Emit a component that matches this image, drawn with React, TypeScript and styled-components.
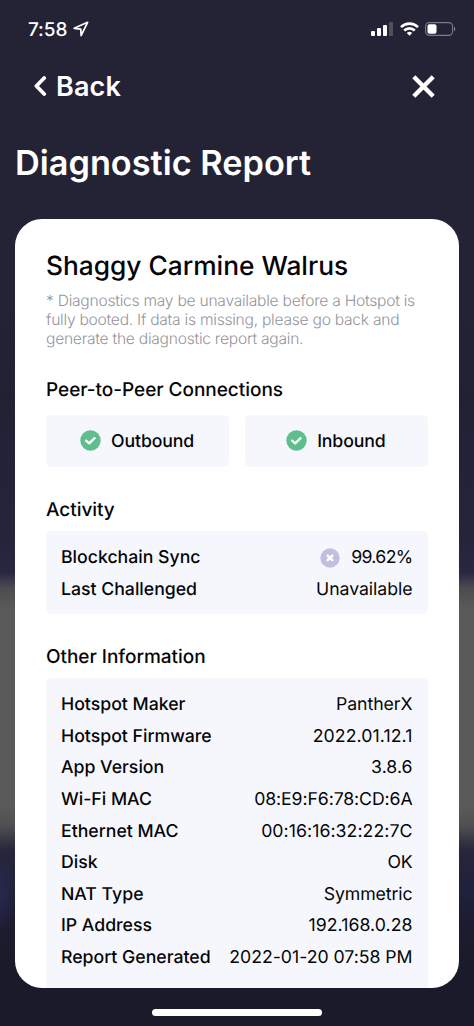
import React from 'react';
import styled, { createGlobalStyle } from 'styled-components';

const GlobalStyle = createGlobalStyle`
  *, *::before, *::after { box-sizing: border-box; }
  body {
    margin: 0;
    font-family: Inter, "Liberation Sans", sans-serif;
    text-rendering: geometricPrecision;
    -webkit-font-smoothing: antialiased;
    background: #242336;
  }
  h1, h2, h3, p, dl, dt, dd { margin: 0; font-weight: inherit; }
`;

const Screen = styled.main`
  width: 474px;
  height: 1026px;
  display: flex;
  flex-direction: column;
  overflow: hidden;
  color: #fff;
  background:
    radial-gradient(ellipse 16px 40px at 0 893px, rgba(44, 44, 84, 0.7), rgba(44, 44, 84, 0)),
    linear-gradient(
      180deg,
      #242336 0, #242336 300px, #222134 400px, #25243a 540px, #292843 573px,
      #4c4c50 588px, #5a5a5a 610px, #5a5a5a 805px, #505052 825px, #26273b 850px,
      #1f203a 895px, #1b1c2e 930px, #1a1b2a 960px, #1a1b2a 1026px
    );
`;

const StatusBar = styled.header`
  height: 58px;
  padding: 0 18px 0 28px;
  display: flex;
  align-items: center;
  justify-content: space-between;
`;

const Clock = styled.div`
  display: flex;
  align-items: center;
  gap: 5.5px;
  font-size: 19px;
  font-weight: 500;
  line-height: 24px;
`;

const ClockText = styled.span`
  padding-top: 2px;
  letter-spacing: -0.1px;
`;

const Indicators = styled.div`
  display: flex;
  align-items: center;
  gap: 6.5px;
`;

const Icon = styled.svg`
  display: block;
  flex: none;
`;

const NavBar = styled.nav`
  height: 56px;
  padding: 0 39px 0 34px;
  display: flex;
  align-items: center;
  justify-content: space-between;
`;

const PlainButton = styled.button`
  display: flex;
  align-items: center;
  gap: 9px;
  padding: 0;
  border: 0;
  background: none;
  color: inherit;
  font: 600 27px/32px Inter, "Liberation Sans", sans-serif;
  letter-spacing: 0;
`;

const BackText = styled.span`
  padding-top: 1.5px;
  letter-spacing: 0.15px;
`;

const PageTitle = styled.h1`
  height: 104.5px;
  padding: 28px 0 0 15px;
  font-size: 34.3px;
  font-weight: 600;
  line-height: 44px;
  white-space: nowrap;
`;

const Card = styled.article`
  height: 769.5px;
  margin: 0 15px;
  padding: 31px 31px 0;
  border-radius: 27px;
  overflow: hidden;
  background: #fff;
  color: #050507;
`;

const HotspotName = styled.h2`
  font-size: 26.3px;
  font-weight: 500;
  line-height: 34px;
  white-space: nowrap;
`;

const Note = styled.p`
  margin-top: 8.5px;
  font-size: 15.6px;
  font-weight: 300;
  line-height: 18.8px;
  letter-spacing: -0.25px;
  color: #94959b;
  white-space: nowrap;
`;

const Section = styled.section<{ $gap: number }>`
  margin-top: ${({ $gap }) => $gap}px;
`;

const SectionTitle = styled.h3<{ $space?: number }>`
  height: 26px;
  margin-bottom: ${({ $space = 8 }) => $space}px;
  font-size: 19px;
  font-weight: 500;
  line-height: 26px;
  letter-spacing: -0.04px;
`;

const StatusGrid = styled.div`
  display: grid;
  grid-template-columns: 1fr 1fr;
  gap: 15.5px;
`;

const StatusTile = styled.div`
  height: 52px;
  padding-right: 1px;
  border-radius: 5px;
  background: #f6f7fc;
  display: flex;
  align-items: center;
  justify-content: center;
  gap: 10px;
  font-size: 17.7px;
  font-weight: 500;
  line-height: 22px;
  letter-spacing: -0.12px;
`;

const TileLabel = styled.span`
  padding-top: 2px;
`;

const Panel = styled.dl<{ $height: number }>`
  height: ${({ $height }) => $height}px;
  padding: 11px 15.5px 9px 15px;
  border-radius: 5px;
  background: #f6f7fc;
`;

const Row = styled.div`
  height: 31.6px;
  display: flex;
  align-items: center;
  justify-content: space-between;
  font-size: 17.7px;
  white-space: nowrap;
`;

const Label = styled.dt`
  font-weight: 500;
  letter-spacing: -0.01px;
`;

const Value = styled.dd<{ $tracking?: number }>`
  display: flex;
  align-items: center;
  gap: 11px;
  font-weight: 400;
  letter-spacing: ${({ $tracking = 0 }) => $tracking}px;
`;

const HomeIndicator = styled.div`
  width: 170px;
  height: 6.5px;
  margin: 21px 0 0 152px;
  flex: none;
  border-radius: 4px;
  background: #fff;
`;

const CheckBadge = () => (
  <Icon width="21" height="21" viewBox="0 0 21 21">
    <circle cx="10.5" cy="10.5" r="10.2" fill="#5fbf8c" />
    <path d="M6.1 10.6l3.1 2.8 5.4-5.3" fill="none" stroke="#fff" strokeWidth="2.3" strokeLinecap="round" strokeLinejoin="round" />
  </Icon>
);

const CrossBadge = () => (
  <Icon width="20" height="20" viewBox="0 0 20 20">
    <circle cx="10" cy="10" r="9.7" fill="#bfbfe1" />
    <path d="M7.7 7.6l4.6 4.6M12.3 7.6l-4.6 4.6" fill="none" stroke="#fff" strokeWidth="2.6" strokeLinecap="round" />
  </Icon>
);

const details: [string, string, number?][] = [
  ['Hotspot Maker', 'PantherX', -0.05],
  ['Hotspot Firmware', '2022.01.12.1', 0.08],
  ['App Version', '3.8.6'],
  ['Wi-Fi MAC', '08:E9:F6:78:CD:6A', -0.11],
  ['Ethernet MAC', '00:16:16:32:22:7C', 0.06],
  ['Disk', 'OK', -0.2],
  ['NAT Type', 'Symmetric', -0.1],
  ['IP Address', '192.168.0.28', 0.05],
  ['Report Generated', '2022-01-20 07:58 PM', -0.03],
];

export default function App() {
  return (
    <>
      <GlobalStyle />
      <Screen>
        <StatusBar>
          <Clock>
            <ClockText>7:58</ClockText>
            <Icon width="16" height="16" viewBox="0 0 16 16" fill="none" stroke="#fff" strokeWidth="1.7" strokeLinejoin="round">
              <path d="M14.6 1.3L1.2 7.3l6.6.8.3 6.5z" />
            </Icon>
          </Clock>
          <Indicators>
            <Icon width="22" height="14" viewBox="0 0 22 14" fill="#fff">
              <rect x="0" y="9" width="4" height="5" rx="1" />
              <rect x="6" y="6" width="4" height="8" rx="1" />
              <rect x="12" y="3" width="4" height="11" rx="1" />
              <rect x="18" y="0" width="4" height="14" rx="1" opacity="0.2" />
            </Icon>
            <Icon width="19" height="14" viewBox="0 0 19 14" fill="none" stroke="#fff" strokeWidth="2.6">
              <path d="M1 5.1a12.2 12.2 0 0 1 17 0" />
              <path d="M4.2 8.5a7.6 7.6 0 0 1 10.6 0" />
              <path d="M9.5 13.8l-2.7-2.7a3.8 3.8 0 0 1 5.4 0z" fill="#fff" stroke="none" />
            </Icon>
            <Icon width="31" height="14" viewBox="0 0 31 14">
              <rect x="0.6" y="0.6" width="27" height="12.8" rx="3.8" fill="none" stroke="#fff" strokeOpacity="0.4" strokeWidth="1.1" />
              <rect x="2.5" y="2.3" width="9" height="9.4" rx="1.8" fill="#fff" />
              <path d="M29 4.8c1.8.7 1.8 3.7 0 4.4z" fill="#fff" opacity="0.45" />
            </Icon>
          </Indicators>
        </StatusBar>
        <NavBar>
          <PlainButton type="button">
            <Icon width="13" height="20" viewBox="0 0 13 20" fill="none" stroke="#fff" strokeWidth="3.8" strokeLinecap="round" strokeLinejoin="round">
              <path d="M10.2 2L2.4 10l7.8 8" />
            </Icon>
            <BackText>Back</BackText>
          </PlainButton>
          <PlainButton type="button" aria-label="Close">
            <Icon width="23" height="23" viewBox="0 0 23 23" fill="none" stroke="#fff" strokeWidth="4.4">
              <path d="M1.8 1.8l19.4 19.4M21.2 1.8L1.8 21.2" />
            </Icon>
          </PlainButton>
        </NavBar>
        <PageTitle>Diagnostic Report</PageTitle>
        <Card>
          <HotspotName>Shaggy Carmine Walrus</HotspotName>
          <Note>
            * Diagnostics may be unavailable before a Hotspot is
            <br />
            fully booted. If data is missing, please go back and
            <br />
            generate the diagnostic report again.
          </Note>
          <Section $gap={28.5}>
            <SectionTitle $space={12}>Peer-to-Peer Connections</SectionTitle>
            <StatusGrid>
              <StatusTile><CheckBadge /><TileLabel>Outbound</TileLabel></StatusTile>
              <StatusTile><CheckBadge /><TileLabel>Inbound</TileLabel></StatusTile>
            </StatusGrid>
          </Section>
          <Section $gap={30}>
            <SectionTitle>Activity</SectionTitle>
            <Panel $height={83}>
              <Row>
                <Label>Blockchain Sync</Label>
                <Value $tracking={-0.65}><CrossBadge />99.62%</Value>
              </Row>
              <Row>
                <Label>Last Challenged</Label>
                <Value $tracking={-0.05}>Unavailable</Value>
              </Row>
            </Panel>
          </Section>
          <Section $gap={30}>
            <SectionTitle>Other Information</SectionTitle>
            <Panel $height={340}>
              {details.map(([label, value, tracking]) => (
                <Row key={label}>
                  <Label>{label}</Label>
                  <Value $tracking={tracking}>{value}</Value>
                </Row>
              ))}
            </Panel>
          </Section>
        </Card>
        <HomeIndicator />
      </Screen>
    </>
  );
}
